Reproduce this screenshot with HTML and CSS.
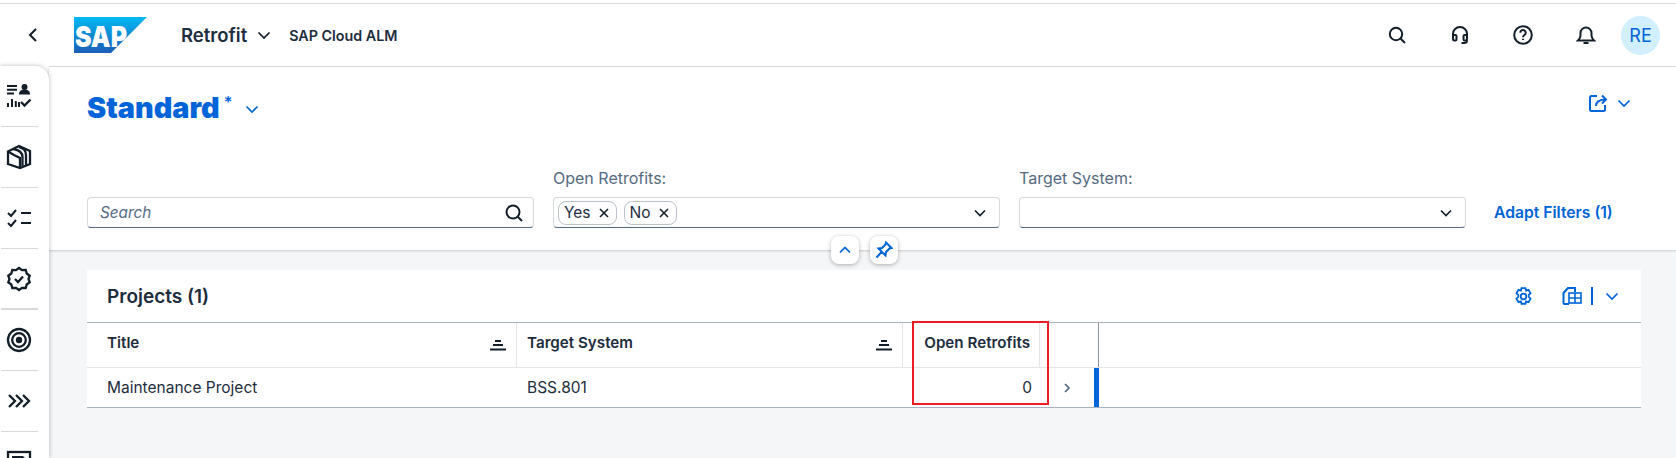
FILE: index.html
```html
<!DOCTYPE html>
<html lang="en">
<head>
  <meta charset="UTF-8">
  <title>Retrofit</title>
  <link rel="stylesheet" href="styles.css">
</head>
<body>
  <header class="shell-bar">
    <svg class="back" width="12" height="16" viewBox="0 0 12 16"><path d="M9 2 3 8l6 6"/></svg>
    <svg class="logo" width="73" height="36" viewBox="0 0 73 36">
      <defs>
        <linearGradient id="sapGrad" x1="0" y1="0" x2="0" y2="1">
          <stop offset="0" stop-color="#00b9f2"/>
          <stop offset="1" stop-color="#1d5db8"/>
        </linearGradient>
      </defs>
      <polygon points="0,0 73,0 37,36 0,36" fill="url(#sapGrad)"/>
      <text x="1" y="30" class="logo-text" textLength="52" lengthAdjust="spacingAndGlyphs">SAP</text>
    </svg>
    <span class="app-title">Retrofit</span>
    <svg class="chev dark" width="14" height="14" viewBox="0 0 14 14"><path d="M1.500 4.500 7 10l5.500-5.500"/></svg>
    <span class="app-sub">SAP Cloud ALM</span>
    <div class="shell-actions">
      <svg class="ico" width="20" height="20" viewBox="0 0 20 20"><circle cx="9" cy="9" r="6.200"/><path d="m13.500 13.500 4.500 4.500"/></svg>
      <svg class="ico" width="20" height="20" viewBox="0 0 20 20"><path d="M3 12V9a7 7 0 0 1 14 0v3"/><rect x="3" y="10" width="3.500" height="5.500" rx="1.200"/><rect x="13.500" y="10" width="3.500" height="5.500" rx="1.200"/><path d="M17 15.500c0 1.800-1.500 2.500-3 2.500h-2.500"/></svg>
      <svg class="ico" width="20" height="20" viewBox="0 0 20 20"><circle cx="10" cy="10" r="8.800"/><path d="M7.300 7.800a2.700 2.700 0 1 1 4.200 2.200c-1 .7-1.500 1.100-1.500 2.300"/><path d="M10 13.700v1.300"/></svg>
      <svg class="ico" width="20" height="20" viewBox="0 0 20 20"><path d="M2 15.500h16c-1.500-1.500-2.500-2.500-2.500-5V8a5.500 5.500 0 0 0-11 0v2.500c0 2.500-1 3.500-2.500 5Z"/><path d="M7.500 18h5"/></svg>
      <span class="avatar">RE</span>
    </div>
  </header>

  <div class="main">
    <nav class="side-nav">
      <div class="nav-item">
        <svg class="ico" width="26" height="26" viewBox="0 0 26 26">
          <path d="M1 3h10M1 6.800h10M1 10.500h7"/>
          <circle class="solid" cx="18.500" cy="4" r="3"/><path class="solid" d="M13 11.500c0-3.500 2-5 5.500-5s5.500 1.500 5.500 5Z"/>
          <path d="M2 24v-4M6 24v-8M9.800 24v-6M13 24v-5"/>
          <path class="heavy" d="m15 19 3.500 3.500 6-6"/>
        </svg>
      </div>
      <div class="nav-item">
        <svg class="ico boxy" width="26" height="26" viewBox="0 0 26 26"><path d="M2 7.500 13 2l11 5v13l-10 4-12-4Z"/><path d="M2 7.500 8 11l6 3v10"/><path d="M7.500 5c5 1 9 3.500 9 8v9"/><path d="M13 3c5 1 7 4 7 8v10"/></svg>
      </div>
      <div class="nav-item">
        <svg class="ico" width="26" height="26" viewBox="0 0 26 26"><path d="m2 8 3 3 5-6M2 18l3 3 5-6M15 8h10M15 18h10"/></svg>
      </div>
      <div class="nav-item nav-item-heavy">
        <svg class="ico boxy" width="26" height="26" viewBox="0 0 26 26"><path d="m13 2 3 2.200 3.700-.2 1 3.500 3 2.200L22.500 13l1.200 3.300-3 2.200-1 3.500-3.700-.2L13 24l-3-2.200-3.700.2-1-3.500-3-2.200L3.500 13 2.300 9.700l3-2.200 1-3.500 3.700.2Z"/><path d="m9 13 3 3 5-5.500"/></svg>
      </div>
      <div class="nav-item">
        <svg class="ico boxy" width="26" height="26" viewBox="0 0 26 26"><circle cx="13" cy="13" r="11"/><circle cx="13" cy="13" r="6.800"/><circle class="solid" cx="13" cy="13" r="3.200"/></svg>
      </div>
      <div class="nav-item">
        <svg class="ico boxy" width="26" height="26" viewBox="0 0 26 26"><path d="m3 7 6 6-6 6M10 7l6 6-6 6M17 7l6 6-6 6"/></svg>
      </div>
      <div class="nav-item">
        <svg class="ico boxy" width="26" height="26" viewBox="0 0 26 26"><rect x="2" y="3" width="22" height="20"/><path class="solid" d="M6 7h11l3 3v3H6Z"/></svg>
      </div>
    </nav>

    <div class="content">
      <section class="filter-bar">
        <div class="page-head">
          <h1 class="variant">Standard</h1>
          <span class="variant-star">*</span>
          <svg class="chev blue" width="14" height="14" viewBox="0 0 14 14"><path d="M1.500 4.500 7 10l5.500-5.500"/></svg>
          <div class="page-actions">
            <svg class="ico blue-ico" width="20" height="20" viewBox="0 0 20 20"><path d="M9 3H3.500A1.500 1.500 0 0 0 2 4.500v12A1.500 1.500 0 0 0 3.500 18h12a1.500 1.500 0 0 0 1.500-1.500V12"/><path d="M8 13c0-4 3-6.500 10-6.500M14 2.500l4 4-4 4"/></svg>
            <svg class="chev blue" width="14" height="14" viewBox="0 0 14 14"><path d="M1.500 4.500 7 10l5.500-5.500"/></svg>
          </div>
        </div>
        <div class="filters">
          <div class="field field-search">
            <div class="input">
              <span class="placeholder">Search</span>
              <svg class="ico" width="20" height="20" viewBox="0 0 20 20"><circle cx="9" cy="9" r="6.500"/><path d="m13.500 13.500 4.500 4.500"/></svg>
            </div>
          </div>
          <div class="field">
            <label class="field-label">Open Retrofits:</label>
            <div class="input input-tokens">
              <span class="token">Yes <svg class="ico thin" width="10" height="10" viewBox="0 0 10 10"><path d="m1 1 8 8M9 1 1 9"/></svg></span>
              <span class="token">No <svg class="ico thin" width="10" height="10" viewBox="0 0 10 10"><path d="m1 1 8 8M9 1 1 9"/></svg></span>
              <svg class="chev dark push" width="14" height="14" viewBox="0 0 14 14"><path d="M2 4.500 7 9.500l5-5"/></svg>
            </div>
          </div>
          <div class="field">
            <label class="field-label">Target System:</label>
            <div class="input">
              <svg class="chev dark push" width="14" height="14" viewBox="0 0 14 14"><path d="M2 4.500 7 9.500l5-5"/></svg>
            </div>
          </div>
          <a class="adapt">Adapt Filters (1)</a>
        </div>
        <div class="bar-buttons">
          <button class="float-btn"><svg class="chev blue" width="14" height="14" viewBox="0 0 14 14"><path d="M2 9.500 7 4.500l5 5"/></svg></button>
          <button class="float-btn"><svg class="ico blue-ico" width="18" height="18" viewBox="0 0 18 18"><path d="M11 1.500 16.500 7l-2 .5-3.500 3.500-.5 3.500L3.500 7.500 7 7l3.500-3.500ZM6.500 11 1.500 16.500"/></svg></button>
        </div>
      </section>

      <section class="panel">
        <div class="panel-head">
          <h2>Projects (1)</h2>
          <div class="panel-actions">
            <svg class="ico blue-ico gear" width="19" height="19" viewBox="1.500 0 15 17"><path d="M7.200 1h3.600l.5 2.200 2.200-.7 1.800 3.100-1.600 1.500v1.800l1.600 1.500-1.800 3.100-2.200-.7-.5 2.200H7.200l-.5-2.200-2.200.7-1.800-3.100 1.600-1.500V7.100L2.700 5.600l1.800-3.100 2.200.7Z"/><circle cx="9" cy="8.500" r="2.500"/></svg>
            <svg class="ico blue-ico export" width="20" height="18" viewBox="0 0 20 18"><path d="M7 17H2.500a1 1 0 0 1-1-1V6l4.500-5h7v4"/><rect x="7" y="6" width="12" height="10"/><path class="fine" d="M13 6v10M7 11h12"/></svg>
            <span class="sep"></span>
            <svg class="chev blue" width="14" height="14" viewBox="0 0 14 14"><path d="M1.500 4.500 7 10l5.500-5.500"/></svg>
          </div>
        </div>
        <div class="table">
          <div class="row row-head">
            <div class="cell cell-line"><span>Title</span><svg class="sort" width="16" height="12" viewBox="0 0 16 12"><path d="M5 2h6M3 6h10M0 10.500h16"/></svg></div>
            <div class="cell cell-line"><span>Target System</span><svg class="sort" width="16" height="12" viewBox="0 0 16 12"><path d="M5 2h6M3 6h10M0 10.500h16"/></svg></div>
            <div class="cell cell-line cell-right cell-retro"><span>Open Retrofits</span></div>
            <div class="cell cell-end"></div>
            <div class="cell"></div>
          </div>
          <div class="row row-body">
            <div class="cell">Maintenance Project</div>
            <div class="cell cell-indent">BSS.801</div>
            <div class="cell cell-right cell-retro">0</div>
            <div class="cell cell-end cell-nav"><svg class="chev grey" width="10" height="12" viewBox="0 0 10 12"><path d="m3 2 4 4-4 4"/></svg></div>
            <div class="cell"></div>
          </div>
          <div class="highlight"></div>
        </div>
      </section>
    </div>
  </div>
</body>
</html>
```

FILE: styles.css
```css
* {
  box-sizing: border-box;
  margin: 0;
  padding: 0;
}

html, body {
  height: 100%;
}

body {
  font-family: 'Inter', 'Liberation Sans', sans-serif;
  color: #1d2d3e;
  background: #fff;
  overflow: hidden;
  font-size: 15.5px;
}

svg {
  display: block;
  flex: none;
}

.ico path, .ico circle, .ico rect, .ico polygon {
  fill: none;
  stroke: #131e29;
  stroke-width: 2;
}

.ico.thin path {
  stroke-width: 1.6;
}

.ico.boxy path, .ico.boxy circle, .ico.boxy rect {
  stroke-width: 2.3;
}

.ico .heavy {
  stroke-width: 2.4;
}

.ico path.solid, .ico circle.solid, .ico.boxy path.solid, .ico.boxy circle.solid {
  fill: #131e29;
  stroke: none;
}

.blue-ico path, .blue-ico circle, .blue-ico rect {
  stroke: #0064d9;
}

.blue-ico.gear path, .blue-ico.gear circle {
  stroke-width: 1.6;
}

.blue-ico.export rect, .blue-ico .fine {
  stroke-width: 1.6;
}

.chev path {
  fill: none;
  stroke-width: 1.7;
}

.chev.dark path { stroke: #131e29; }
.chev.blue path { stroke: #0064d9; }
.chev.grey path { stroke: #556b82; }

.shell-bar {
  height: 63px;
  margin-top: 3px;
  border-top: 1px solid #d9d9d9;
  display: flex;
  align-items: center;
  padding-right: 16px;
}

.back {
  margin-left: 27px;
}

.back path {
  fill: none;
  stroke: #131e29;
  stroke-width: 2;
}

.logo {
  margin-left: 35px;
}

.logo-text {
  font-family: 'Inter', sans-serif;
  font-weight: 900;
  font-size: 29px;
  fill: #fff;
}

.app-title {
  margin-left: 34px;
  font-size: 18.500px;
  font-weight: 600;
}

.app-title + .chev {
  margin-left: 10px;
}

.app-sub {
  margin-left: 18px;
  font-size: 14.300px;
  font-weight: 600;
}

.shell-actions {
  margin-left: auto;
  display: flex;
  align-items: center;
  gap: 43px;
}

.avatar {
  width: 39px;
  height: 39px;
  margin-left: -18px;
  border-radius: 50%;
  background: #d1efff;
  color: #0064d9;
  font-size: 18px;
  display: flex;
  align-items: center;
  justify-content: center;
}

.main {
  display: flex;
  height: 392px;
}

.side-nav {
  width: 49px;
  border-top-right-radius: 14px;
  box-shadow: 0 0 5px rgba(0, 0, 0, 0.28);
  padding-left: 1px;
  overflow: hidden;
  background: #fff;
  position: relative;
  z-index: 2;
  clip-path: inset(-6px -6px 0 0);
}

.nav-item {
  width: 37px;
  height: 61px;
  border-bottom: 1px solid #d9d9d9;
  display: flex;
  align-items: center;
  justify-content: center;
  padding-right: 2px;
}

.nav-item-heavy {
  border-bottom-width: 2px;
}

.content {
  flex: 1;
  background: #f5f6f7;
}

.filter-bar {
  position: relative;
  height: 184px;
  background: #fff;
  border-top: 1px solid #d9d9d9;
  box-shadow: 0 1px 2px rgba(0, 0, 0, 0.18);
  padding: 0 38px;
}

.page-head {
  display: flex;
  align-items: center;
  height: 80px;
}

.variant {
  font-size: 28.800px;
  font-weight: 900;
  color: #0064d9;
}

.variant-star {
  color: #0064d9;
  font-size: 16px;
  font-weight: 600;
  margin: -10px 0 0 4px;
}

.variant-star + .chev {
  margin: 4px 0 0 13px;
}

.page-actions {
  margin-left: auto;
  display: flex;
  align-items: center;
  gap: 9px;
  padding-right: 7px;
  margin-top: -8px;
}

.filters {
  display: flex;
  align-items: flex-end;
  gap: 19px;
  margin-top: 21px;
}

.field {
  width: 447px;
}

.field-label {
  display: block;
  color: #556b82;
  font-size: 16px;
  line-height: 20px;
  margin-bottom: 9px;
}

.input {
  height: 31px;
  display: flex;
  align-items: center;
  padding: 0 9px 0 12px;
  border: 1px solid #d5dadd;
  border-bottom: 1px solid #556b81;
  border-radius: 4px;
}

.input .ico {
  margin-left: auto;
}

.placeholder {
  font-style: italic;
  color: #556b82;
  font-size: 15.300px;
}

.input-tokens {
  padding-left: 4px;
  gap: 7px;
}

.token {
  height: 24px;
  display: flex;
  align-items: center;
  gap: 8px;
  padding: 0 7px 0 5px;
  border: 1px solid #bcc3ca;
  border-radius: 8px;
  font-size: 15.500px;
}

.token .ico {
  margin-left: 0;
}

.push {
  margin-left: auto;
  margin-right: 3px;
}

.adapt {
  color: #0064d9;
  font-size: 15.700px;
  font-weight: 600;
  margin-left: 9px;
  line-height: 31px;
}

.bar-buttons {
  position: absolute;
  left: 782px;
  top: 169px;
  display: flex;
  gap: 11px;
}

.float-btn {
  width: 28px;
  height: 28px;
  border: none;
  background: #fff;
  border-radius: 8px;
  box-shadow: 0 1px 4px rgba(0, 0, 0, 0.3);
  display: flex;
  align-items: center;
  justify-content: center;
}

.panel {
  margin: 20px 35px 0 38px;
  background: #fff;
}

.panel-head {
  height: 52px;
  display: flex;
  align-items: center;
  padding: 0 22px 0 20px;
}

.panel-head h2 {
  font-size: 19px;
  font-weight: 600;
}

.panel-actions {
  margin-left: auto;
  display: flex;
  align-items: center;
}

.export {
  margin-left: 29px;
}

.sep {
  width: 2px;
  height: 18px;
  background: #0064d9;
  margin: 0 12px 0 9px;
}

.table {
  position: relative;
  border-top: 1px solid #a8b2bd;
  border-bottom: 1px solid #a8b2bd;
}

.row {
  display: grid;
  grid-template-columns: 430px 386px 137px 59px 1fr;
}

.row-head {
  height: 45px;
  border-bottom: 1px solid #e5e5e5;
  font-weight: 600;
  font-size: 15.200px;
}

.row-head span {
  margin-bottom: 6px;
}

.row-body {
  height: 39px;
}

.cell {
  display: flex;
  align-items: center;
  padding: 0 20px;
}

.row-head .cell {
  justify-content: space-between;
  padding: 0 10px 0 20px;
}

.row-head .cell:nth-child(2) {
  padding-left: 10px;
}

.cell-line {
  border-right: 1px solid #e5e5e5;
}

.cell-indent {
  padding-left: 10px;
}

.row-head .cell-right,
.cell-right {
  justify-content: flex-end;
  padding: 0 8px 0 0;
}

.row-head .cell-right {
  padding-right: 9px;
}

.cell-end {
  border-right: 1px solid #8c96a0;
  padding: 0 0 0 22px;
}

.row-head .cell-end {
  padding: 0;
}

.cell-nav {
  border-right: 5px solid #0064d9;
}

.sort path {
  fill: none;
  stroke: #131e29;
  stroke-width: 1.8;
}

.highlight {
  position: absolute;
  left: 825px;
  top: -2px;
  width: 137px;
  height: 84px;
  border: 2px solid #ed1c24;
}
```
